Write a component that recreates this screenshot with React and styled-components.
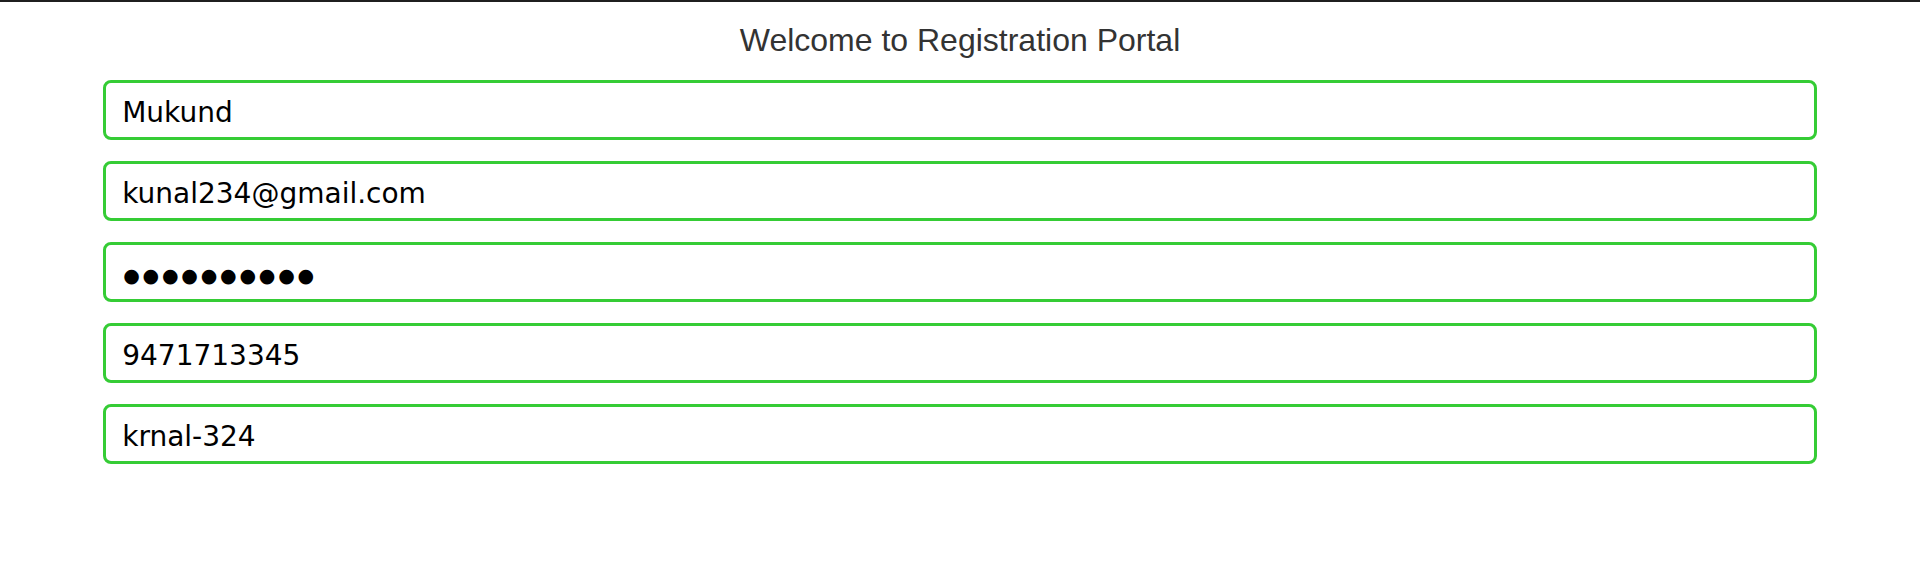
import React from 'react'
import styled, { createGlobalStyle } from 'styled-components'

const GlobalStyle = createGlobalStyle`
  html, body {
    margin: 0;
    padding: 0;
    background: #ffffff;
  }
  * {
    box-sizing: border-box;
  }
`;

// password shown already masked, as the browser drew it
const fields = [
  { type: 'text', value: 'Mukund' },
  { type: 'email', value: 'kunal234@gmail.com' },
  { type: 'text', value: '●●●●●●●●●●', masked: true },
  { type: 'text', value: '9471713345' },
  { type: 'text', value: 'krnal-324' },
];

export default function App() {
  return (
    <Page>
      <GlobalStyle />
      <TopLine />
      <Title>Welcome to Registration Portal</Title>
      <Form>
        {fields.map((f, i) => (
          <Field key={i} type={f.type} value={f.value} $masked={f.masked} readOnly />
        ))}
      </Form>
    </Page>
  )
}

const Page = styled.div`
  display: flex;
  flex-direction: column;
  min-height: 562px;
  background: #ffffff;
`;

const TopLine = styled.div`
  height: 2px;
  width: 100%;
  background: #1f1f1f;
`;

const Title = styled.h2`
  margin: 20px 0 0;
  text-align: center;
  font-family: "Liberation Sans", Arial, sans-serif;
  font-size: 32px;
  font-weight: 400;
  line-height: 37px;
  color: #333333;
`;

const Form = styled.form`
  display: flex;
  flex-direction: column;
  align-items: center;
  gap: 21px;
  margin-top: 21px;
  padding: 0 8px;
`;

const Field = styled.input`
  width: 90%;
  height: 60px;
  padding: ${p => (p.$masked ? '5px 16px 0 17px' : '4px 16px 0')};
  border: 3px solid #35cc35;
  border-radius: 8px;
  outline: none;
  background: #ffffff;
  font-family: "DejaVu Sans", Verdana, sans-serif;
  font-size: ${p => (p.$masked ? '19px' : '28px')};
  letter-spacing: ${p => (p.$masked ? '2.8px' : 'normal')};
  color: #000000;
`;
